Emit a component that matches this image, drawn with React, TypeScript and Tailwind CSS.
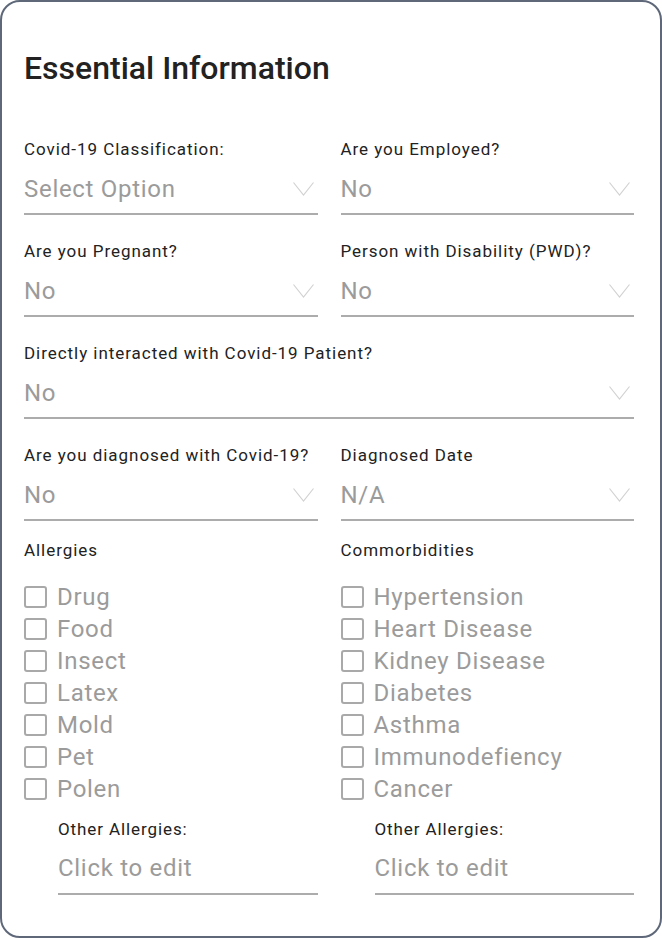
import React from 'react';

const allergies = ['Drug', 'Food', 'Insect', 'Latex', 'Mold', 'Pet', 'Polen'];
const comorbidities = [
  'Hypertension',
  'Heart Disease',
  'Kidney Disease',
  'Diabetes',
  'Asthma',
  'Immunodefiency',
  'Cancer',
];

const Chevron: React.FC = () => (
  <svg width="21" height="14" viewBox="0 0 21 14" fill="none" className="shrink-0">
    <path d="M0.5 0.5 L10.5 13 L20.5 0.5" stroke="#d2d2d2" strokeWidth="1.2" />
  </svg>
);

const SelectField: React.FC<{ label: string; value: string; full?: boolean }> = ({ label, value, full }) => (
  <div className={full ? 'col-span-2' : ''}>
    <p className="text-[17px] leading-[20px] tracking-[0.95px] text-[#222]">{label}</p>
    <div className="mt-[16px] flex items-center justify-between border-b-2 border-[#acacac] pb-[10px] pr-[4px]">
      <span className="text-[24px] leading-[28px] tracking-[0.7px] text-[#9b9b9b]">{value}</span>
      <Chevron />
    </div>
  </div>
);

const CheckList: React.FC<{ title: string; items: string[] }> = ({ title, items }) => (
  <div>
    <p className="text-[17px] leading-[20px] tracking-[0.95px] text-[#222]">{title}</p>
    <div className="mt-[21px] flex flex-col">
      {items.map((item) => (
        <label key={item} className="flex h-[32px] items-center gap-[10px]">
          <span className="h-[22px] w-[23px] rounded-[3px] border-[2.5px] border-[#a9a9a9]" />
          <span className="text-[24px] leading-[28px] tracking-[0.7px] text-[#9b9b9b]">{item}</span>
        </label>
      ))}
    </div>
    <div className="ml-[34px] mt-[14px]">
      <p className="text-[17px] leading-[20px] tracking-[0.9px] text-[#222]">Other Allergies:</p>
      <div className="mt-[15px] border-b-2 border-[#acacac] pb-[10px]">
        <span className="text-[24px] leading-[28px] tracking-[0.7px] text-[#9b9b9b]">Click to edit</span>
      </div>
    </div>
  </div>
);

const App: React.FC = () => {
  return (
    <div className="h-[938px] w-[662px] bg-white font-['Roboto',sans-serif]">
      <div className="h-full rounded-[20px] border-2 border-[#5e6879] pl-[22px] pr-[26px] pt-[47px]">
        <h1 className="text-[32px] font-medium leading-[38px] text-[#222]">Essential Information</h1>

        <div className="mt-[52px] grid grid-cols-2 gap-x-[23px] gap-y-[26px]">
          <SelectField label="Covid-19 Classification:" value="Select Option" />
          <SelectField label="Are you Employed?" value="No" />
          <SelectField label="Are you Pregnant?" value="No" />
          <SelectField label="Person with Disability (PWD)?" value="No" />
          <SelectField label="Directly interacted with Covid-19 Patient?" value="No" full />
          <SelectField label="Are you diagnosed with Covid-19?" value="No" />
          <SelectField label="Diagnosed Date" value="N/A" />
        </div>

        <div className="mt-[19px] grid grid-cols-2 gap-x-[23px]">
          <CheckList title="Allergies" items={allergies} />
          <CheckList title="Commorbidities" items={comorbidities} />
        </div>
      </div>
    </div>
  );
};

export default App;
